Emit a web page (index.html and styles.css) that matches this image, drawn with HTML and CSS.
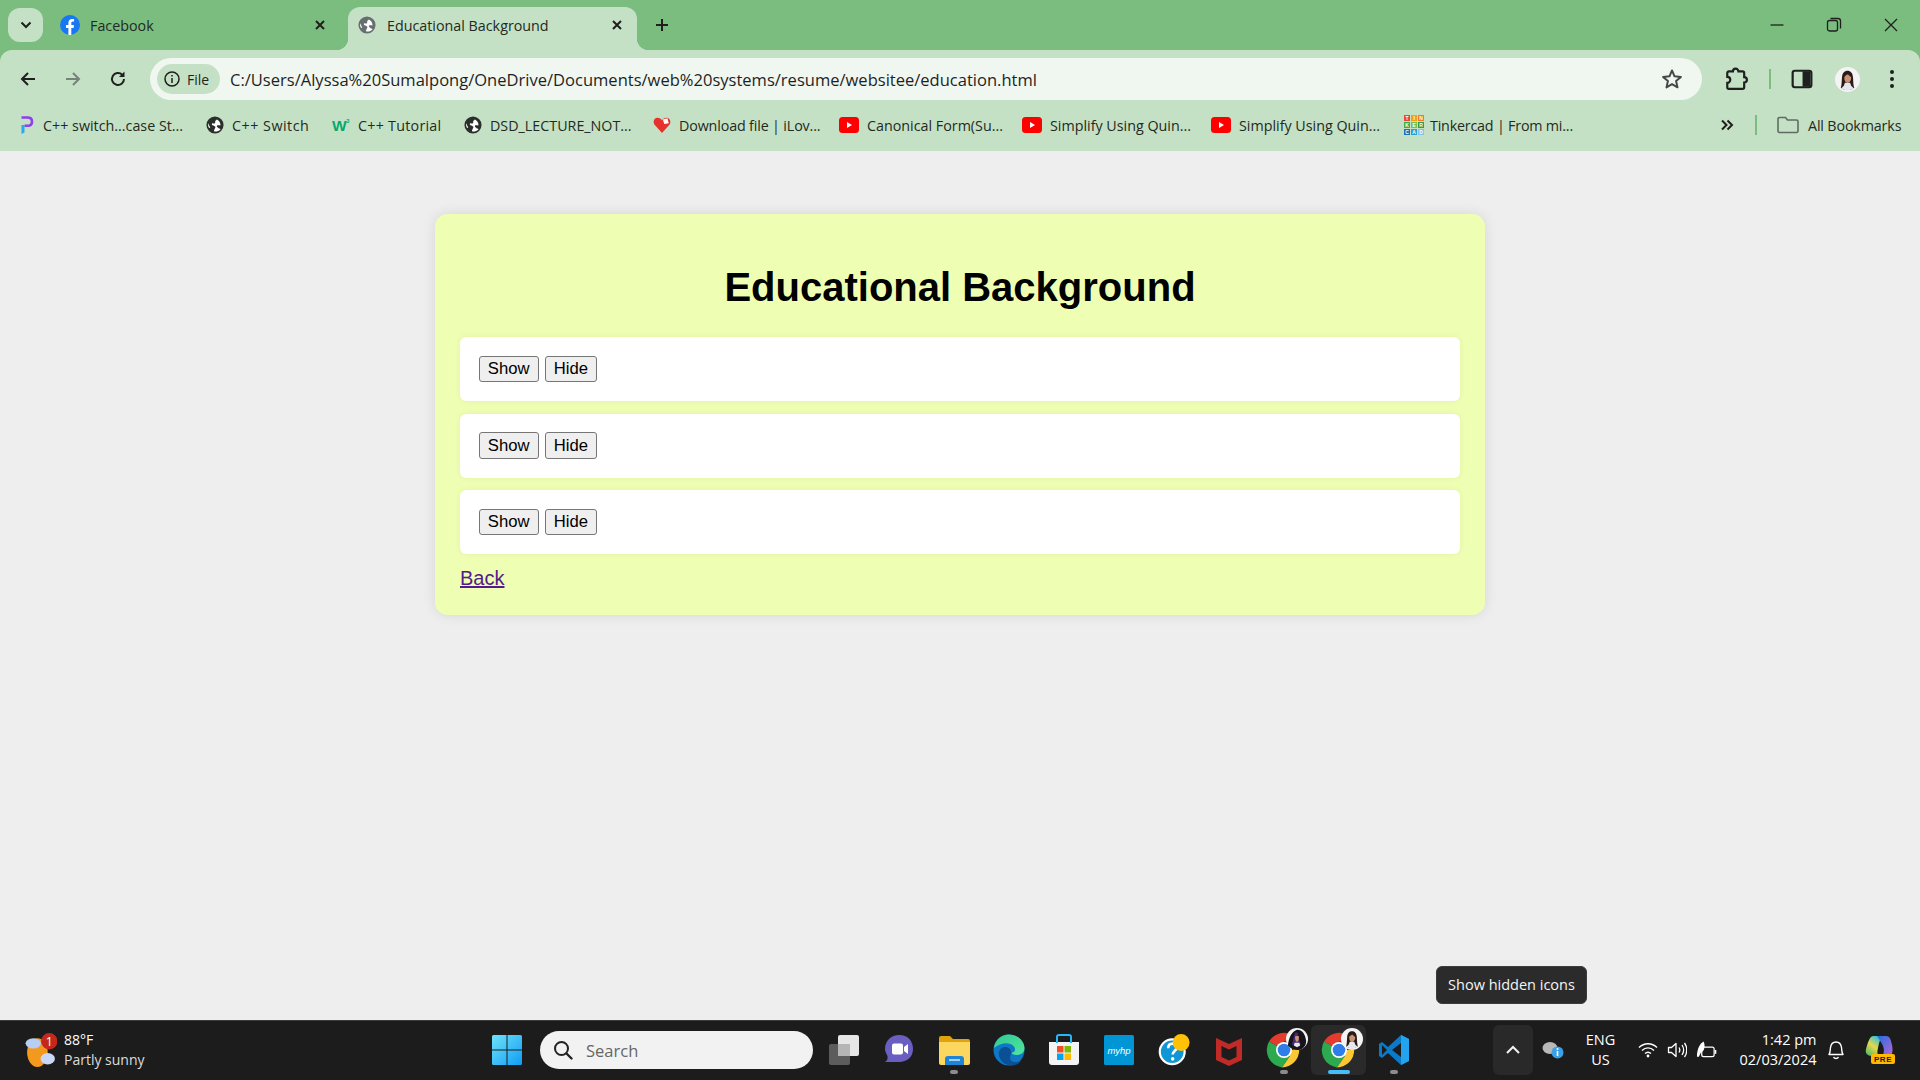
FILE: index.html
```html
<!DOCTYPE html>
<html lang="en">
<head>
<meta charset="utf-8">
<title>Educational Background</title>
<link rel="stylesheet" href="styles.css">
</head>
<body>
<svg class="defs" width="0" height="0" aria-hidden="true">
  <defs>
    <symbol id="globe" viewBox="0 0 20 20">
      <circle cx="10" cy="10" r="9.500" fill="currentColor"/>
      <path d="M12 3c.5 1-.5 1.500-1.200 2S10 6.500 10.300 7.200s-1.300 1.300-2.300 1S6.500 8.500 6.500 9.500s1.500 1 2.800 1.500 1.500 1.500.7 2.500-.5 1.800-1.200 2.700l.4 1.100c3 .3 5.500-.8 7-2.600-.3-.5-.8-.7-1.400-.7-.8 0-1-1.200-2-1.600s-.9-1.700 0-2 2.100 0 3.200.2c.3-2-.5-3.800-2-5.300-.6-.5-1.300-1-2-1.300zM2.500 8C2 10 2.500 12 3.500 13.300c1 0 1.300-.5 1-1S3.800 11 3.400 10.200 3 8.800 2.500 8z" fill="#fff"/>
    </symbol>
    <symbol id="yt" viewBox="0 0 20 16">
      <rect width="20" height="16" rx="3.500" fill="#f00"/>
      <path d="M8 5l5 3-5 3z" fill="#fff"/>
    </symbol>
    <symbol id="chrome" viewBox="0 0 36 36">
      <path d="M18 18L3 9.500A17.500 17.500 0 0 1 33.200 9.500H18z" fill="#e33b2e"/>
      <path d="M18 18L3 9.500A17.500 17.500 0 0 0 16 35.400L24 24z" fill="#2da94f"/>
      <path d="M18 18h15.200A17.500 17.500 0 0 1 16 35.400L24 24z" fill="#fcc934"/>
      <circle cx="18" cy="18" r="8" fill="#fff"/>
      <circle cx="18" cy="18" r="6.300" fill="#2f7de9"/>
    </symbol>
    <symbol id="face" viewBox="0 0 24 24">
      <circle cx="12" cy="12" r="12" fill="#f4f4f4"/>
      <path d="M5.500 20c1-2 .8-6 1.200-10C7 5.500 9 3.500 12 3.500s5 2 5.300 6.500c.3 4 .2 8 1.200 10-2 1.500-4 2-6.500 2s-4.500-.5-6.500-2z" fill="#2a1a18"/>
      <path d="M9 9.500c1-1 2-2 3.500-2.500.5 1 2 2 3 2.800.2 2.500-1 5.200-3.500 5.200S8.800 12 9 9.500z" fill="#c99272"/>
      <path d="M9.500 15h5l1 3 2.500 2.500c-1.800 1.300-3.800 2-6 2s-4.200-.7-6-2L8.500 18z" fill="#e6e6ee"/>
    </symbol>
    <symbol id="face-dark" viewBox="0 0 24 24">
      <circle cx="12" cy="12" r="12" fill="#f4f4f4"/>
      <path d="M2 19C3 14 4 5 12 2c6 0 9 5 10 12 0 3-1 6-3 7.500-2 1.500-4 2.500-7 2.500s-7-1.500-10-5z" fill="#17131a"/>
      <path d="M10 5c-1.500 3-1.800 9-3.500 13l5 2 4.500-2c-2-4-2-9-3.500-13z" fill="#4a2a78"/>
      <path d="M10 9c1.500-.5 3-.5 4 0 .3 3-.5 6-2 6s-2.300-3-2-6z" fill="#c99272"/>
      <path d="M9.500 16h5l1 3-3.500 2-3.500-2z" fill="#e6e6ee"/>
    </symbol>
  </defs>
</svg>

<div class="browser">
  <header class="tabstrip">
    <button class="tab-search" aria-label="Search tabs">
      <svg width="12" height="8" viewBox="0 0 12 8"><path d="M1.500 1.500L6 6l4.500-4.500" class="stroke-dark s2"/></svg>
    </button>
    <div class="tab tab-inactive">
      <svg class="favicon" viewBox="0 0 20 20"><circle cx="10" cy="10" r="10" fill="#1877f2"/><path d="M8.400 20v-7H6v-3h2.400V7.800c0-2.500 1.500-3.800 3.700-3.800 1 0 2 .2 2 .2v2.400h-1.200c-1.200 0-1.600.8-1.600 1.500V10h2.700l-.4 3h-2.300v7z" fill="#fff"/></svg>
      <span class="tab-title">Facebook</span>
      <svg class="tab-close" viewBox="0 0 12 12"><path d="M2 2l8 8M10 2l-8 8" class="stroke-dark s2"/></svg>
    </div>
    <div class="tab tab-active">
      <svg class="favicon globe-tab"><use href="#globe"/></svg>
      <span class="tab-title">Educational Background</span>
      <svg class="tab-close" viewBox="0 0 12 12"><path d="M2 2l8 8M10 2l-8 8" class="stroke-dark s2"/></svg>
    </div>
    <svg class="new-tab" viewBox="0 0 14 14"><path d="M7 1v12M1 7h12" class="stroke-dark s2"/></svg>
    <div class="window-controls">
      <svg viewBox="0 0 16 16"><path d="M1.500 8h13" class="stroke-dark s1"/></svg>
      <svg viewBox="0 0 16 16"><rect x="1.500" y="3.500" width="10" height="10.500" rx="2" class="stroke-dark s1"/><path d="M4.500 1.500h7.500a2.500 2.500 0 0 1 2.500 2.500v7.500" class="stroke-dark s1"/></svg>
      <svg viewBox="0 0 16 16"><path d="M2 2l12 12M14 2L2 14" class="stroke-dark s1"/></svg>
    </div>
  </header>

  <section class="toolbar">
    <div class="navrow">
      <div class="nav-btn"><svg viewBox="0 0 18 18"><path d="M16 9H3M9 3L3 9l6 6" class="stroke-dark s2"/></svg></div>
      <div class="nav-btn"><svg viewBox="0 0 18 18"><path d="M2 9h13M9 3l6 6-6 6" class="stroke-muted s2"/></svg></div>
      <div class="nav-btn"><svg viewBox="0 0 18 18"><path d="M15 9a6 6 0 1 1-1.800-4.300" class="stroke-dark s2"/><path d="M15.500 1.500v5.500H10z" fill="#1f1f1f"/></svg></div>
      <div class="omnibox">
        <div class="chip">
          <svg class="chip-icon" viewBox="0 0 16 16"><circle cx="8" cy="8" r="7" class="stroke-dark s15"/><path d="M8 7v5M8 4v1.600" class="stroke-dark s15"/></svg>
          <span>File</span>
        </div>
        <span class="url">C:/Users/Alyssa%20Sumalpong/OneDrive/Documents/web%20systems/resume/websitee/education.html</span>
        <svg class="star" viewBox="0 0 20 20"><path d="M10 2.200l2.300 5.400 5.800.5-4.400 3.800 1.300 5.700L10 14.600l-5 3 1.300-5.700L1.900 8.100l5.800-.5z" fill="none" stroke="#474747" stroke-width="1.800" stroke-linejoin="round"/></svg>
      </div>
      <svg class="act-ext" viewBox="0 0 22 22"><path d="M4.500 20a1.500 1.500 0 0 1-1.500-1.500v-4a2.500 2.500 0 0 0 0-5.500V5.500A1.500 1.500 0 0 1 4.500 4h3.700a2.500 2.500 0 0 1 5 0H17a1.500 1.500 0 0 1 1.500 1.500v3.700a2.500 2.500 0 0 1 0 5v4.300A1.500 1.500 0 0 1 17 20z" class="stroke-dark s2"/></svg>
      <span class="act-div"></span>
      <svg class="act-panel" viewBox="0 0 20 20"><rect x="1.500" y="2.500" width="17" height="15" rx="2" class="stroke-dark s2"/><path d="M10.500 3h7v14h-7z" fill="#1f1f1f"/></svg>
      <svg class="act-avatar"><use href="#face"/></svg>
      <svg class="act-menu" viewBox="0 0 6 20"><circle cx="3" cy="3" r="2" fill="#1f1f1f"/><circle cx="3" cy="10" r="2" fill="#1f1f1f"/><circle cx="3" cy="17" r="2" fill="#1f1f1f"/></svg>
    </div>
    <nav class="bookmarks">
      <div class="bm b1"><svg class="bm-icon" viewBox="0 0 20 24"><path d="M4 2h8c4 0 6 2.200 6 5.500s-2 5.500-6 5.500H8" fill="none" stroke="#8e3df0" stroke-width="3.500"/><path d="M4 12h4v10l-4 2z" fill="#29a8f0"/></svg><span>C++ switch...case St...</span></div>
      <div class="bm b2"><svg class="bm-icon globe-bm"><use href="#globe"/></svg><span>C++ Switch</span></div>
      <div class="bm b3"><svg class="bm-icon" viewBox="0 0 22 18"><text x="0" y="16" class="w3-w">W</text><text x="17.500" y="7" class="w3-3">3</text></svg><span>C++ Tutorial</span></div>
      <div class="bm b4"><svg class="bm-icon globe-bm"><use href="#globe"/></svg><span>DSD_LECTURE_NOT...</span></div>
      <div class="bm b5"><svg class="bm-icon" viewBox="0 0 20 20"><path d="M10 19L1.500 9.500C-.5 6 1.500 2 5 2c2.200 0 4 1.200 5 3 1-1.800 2.800-3 5-3 3.500 0 5.500 4 3.500 7.500z" fill="#e5322d"/><path d="M11 4l5-1.500 1.500 5.500-5 1z" fill="#fff"/></svg><span>Download file | iLov...</span></div>
      <div class="bm b6"><svg class="bm-icon yt-icon"><use href="#yt"/></svg><span>Canonical Form(Su...</span></div>
      <div class="bm b7"><svg class="bm-icon yt-icon"><use href="#yt"/></svg><span>Simplify Using Quin...</span></div>
      <div class="bm b8"><svg class="bm-icon yt-icon"><use href="#yt"/></svg><span>Simplify Using Quin...</span></div>
      <div class="bm b9">
        <svg class="bm-icon tinker" viewBox="0 0 20 20">
          <rect width="6" height="6" fill="#e8492f"/><rect x="7" width="6" height="6" fill="#f0a020"/><rect x="14" width="6" height="6" fill="#f47a28"/>
          <rect y="7" width="6" height="6" fill="#3fae49"/><rect x="7" y="7" width="6" height="6" fill="#7cc242"/><rect x="14" y="7" width="6" height="6" fill="#2f9e57"/>
          <rect y="14" width="6" height="6" fill="#1c75bc"/><rect x="7" y="14" width="6" height="6" fill="#2a9fd6"/><rect x="14" y="14" width="6" height="6" fill="#7cc4e8"/>
          <text x="3" y="5" class="tk">T</text><text x="10" y="5" class="tk">I</text><text x="17" y="5" class="tk">N</text>
          <text x="3" y="12" class="tk">K</text><text x="10" y="12" class="tk">E</text><text x="17" y="12" class="tk">R</text>
          <text x="3" y="19" class="tk">C</text><text x="10" y="19" class="tk">A</text><text x="17" y="19" class="tk">D</text>
        </svg>
        <span>Tinkercad | From mi...</span>
      </div>
      <svg class="bm-more" viewBox="0 0 14 12"><path d="M2 1.500L6.500 6 2 10.500M7.500 1.500L12 6l-4.500 4.500" class="stroke-dark s2"/></svg>
      <span class="bm-div"></span>
      <svg class="bm-folder" viewBox="0 0 22 18"><path d="M2.500 1.500h6l2 2.500h9a1.500 1.500 0 0 1 1.500 1.500V15a1.500 1.500 0 0 1-1.500 1.500h-17A1.500 1.500 0 0 1 1 15V3a1.500 1.500 0 0 1 1.500-1.500z" fill="none" stroke="#5f6b63" stroke-width="1.600"/></svg>
      <span class="bm-all">All Bookmarks</span>
    </nav>
  </section>

  <main class="page">
    <article class="card">
      <h1>Educational Background</h1>
      <div class="row"><button>Show</button><button>Hide</button></div>
      <div class="row"><button>Show</button><button>Hide</button></div>
      <div class="row"><button>Show</button><button>Hide</button></div>
      <a class="back" href="#">Back</a>
    </article>
    <div class="tooltip">Show hidden icons</div>
  </main>

  <footer class="taskbar">
    <div class="weather">
      <svg class="weather-icon" viewBox="0 0 32 34">
        <ellipse cx="13" cy="19" rx="10" ry="14" fill="#f39a1e"/>
        <ellipse cx="9" cy="10" rx="7.500" ry="5" fill="#b8cdf2"/>
        <ellipse cx="23" cy="25" rx="7" ry="5.500" fill="#c8d8f6"/>
        <circle cx="24.500" cy="8" r="8" fill="#c4281c"/>
        <text x="24.500" y="12.500" class="badge-num">1</text>
      </svg>
      <div class="weather-text"><span class="temp">88°F</span><span class="cond">Partly sunny</span></div>
    </div>
    <svg class="win" viewBox="0 0 30 30"><defs><linearGradient id="wg" x1="0" y1="0" x2="1" y2="1"><stop offset="0" stop-color="#6fe3fb"/><stop offset="1" stop-color="#0f9cf3"/></linearGradient></defs><path d="M0 1.500A1.500 1.500 0 0 1 1.500 0h13v14.500H0zM15.500 0H28.500A1.500 1.500 0 0 1 30 1.500v13H15.500zM0 15.500h14.500V30H1.500A1.500 1.500 0 0 1 0 28.500zM15.500 15.500H30v13a1.500 1.500 0 0 1-1.500 1.500h-13z" fill="url(#wg)"/></svg>
    <div class="search">
      <svg viewBox="0 0 20 20"><circle cx="8.500" cy="8.500" r="6.500" fill="none" stroke="#222" stroke-width="2"/><path d="M13.500 13.500l5 5" stroke="#222" stroke-width="2.400" stroke-linecap="round"/></svg>
      <span>Search</span>
    </div>
    <div class="apps">
      <div class="app"><svg viewBox="0 0 32 32"><rect x="1" y="10" width="21" height="21" rx="2" fill="#5c5c5c"/><rect x="10" y="1" width="21" height="21" rx="2" fill="#e6e6e6"/><rect x="10" y="10" width="12" height="12" fill="#b5b5b5"/></svg></div>
      <div class="app"><svg viewBox="0 0 32 32"><path d="M16 1c9 0 14 6 14 14s-6 13-14 13H2c2-1 3-3 2.500-6C3 19 2 17 2 15 2 7 8 1 16 1z" fill="#6a5fc1"/><rect x="9" y="9.500" width="11" height="11" rx="2" fill="#fff"/><path d="M21 13l4-3v10l-4-3z" fill="#fff"/></svg></div>
      <div class="app has-dot"><svg viewBox="0 0 32 32"><path d="M1 4a2 2 0 0 1 2-2h9l3 3h15a2 2 0 0 1 2 2v3H1z" fill="#e0a30b"/><path d="M1 8h31v21a2 2 0 0 1-2 2H3a2 2 0 0 1-2-2z" fill="#fcd75f"/><path d="M7 31v-6a3 3 0 0 1 3-3h13a3 3 0 0 1 3 3v6z" fill="#1f83d6"/><rect x="11" y="25" width="11" height="2" fill="#9dd2f7"/></svg></div>
      <div class="app"><svg viewBox="0 0 32 32"><defs><linearGradient id="eg" x1="0" y1="0" x2="1" y2="1"><stop offset="0" stop-color="#30c98f"/><stop offset="1" stop-color="#50e6a0"/></linearGradient></defs><circle cx="16" cy="16" r="15.500" fill="#0f78c4"/><path d="M1 14C2 6 8 .5 16 .5c9 0 15.500 7 15.500 13.500 0 5-4 7-8 7-3 0-5-1-5-2.500 4 0 4.500-4 2-6.500C17 8 8 8 1 14z" fill="url(#eg)"/><path d="M18.500 18.500c-.5-6-9-8-12-2-2.500 5.500 2 15 12 15 4 0 8-2 10-5-4 2-8 2-10 .5-2.500-2-1-7 0-8.500z" fill="#0b4f94"/></svg></div>
      <div class="app"><svg viewBox="0 0 32 32"><path d="M1 8h30v20a3 3 0 0 1-3 3H4a3 3 0 0 1-3-3z" fill="#f4f4f4"/><path d="M9 9V3a2 2 0 0 1 2-2h10a2 2 0 0 1 2 2v6" fill="none" stroke="#29b6f6" stroke-width="2"/><rect x="9" y="12" width="6.500" height="6.500" fill="#f25022"/><rect x="16.500" y="12" width="6.500" height="6.500" fill="#7fba00"/><rect x="9" y="19.500" width="6.500" height="6.500" fill="#00a4ef"/><rect x="16.500" y="19.500" width="6.500" height="6.500" fill="#ffb900"/></svg></div>
      <div class="app"><svg viewBox="0 0 32 32"><rect x="1" y="1" width="30" height="30" rx="1.500" fill="#0096d6"/><text x="16" y="20" class="myhp">myhp</text></svg></div>
      <div class="app"><svg viewBox="0 0 36 36"><circle cx="16" cy="20" r="14" fill="#0f96d6" stroke="#fff" stroke-width="2.500"/><path d="M11.500 16c0-7 9.500-6.500 9.500-1 0 4-4.500 4-4.500 8" fill="none" stroke="#fff" stroke-width="3"/><circle cx="16.500" cy="28" r="2" fill="#fff"/><circle cx="26" cy="9.500" r="9.500" fill="#ffc107"/></svg></div>
      <div class="app"><svg viewBox="0 0 32 32"><path d="M3 4l13 6 13-6v22l-13 6-13-6z" fill="#c12b27"/><path d="M8.500 12v11l7.500 3.500 7.500-3.500V12L16 15.500z" fill="#1c1c1c"/></svg></div>
      <div class="app has-dot chrome-app"><svg class="chrome-icon"><use href="#chrome"/></svg><svg class="chrome-face"><use href="#face-dark"/></svg></div>
      <div class="app app-active chrome-app"><svg class="chrome-icon"><use href="#chrome"/></svg><svg class="chrome-face"><use href="#face"/></svg></div>
      <div class="app has-dot"><svg viewBox="0 0 32 32"><path d="M23 1l8 4v22l-8 4-13-12-6 5-3-2v-12l3-2 6 5z" fill="#0a7acb"/><path d="M23 9v14l-9-7z" fill="#1c1c1c"/><path d="M4 11v10l5-5z" fill="#1c1c1c"/><path d="M23 1l8 4v22l-8 4z" fill="#24a4ee"/></svg></div>
    </div>
    <div class="tray">
      <div class="tray-chevron"><svg viewBox="0 0 16 10"><path d="M2 8l6-6 6 6" fill="none" stroke="#f2f2f2" stroke-width="2"/></svg></div>
      <svg class="tray-cloud" viewBox="0 0 22 20"><ellipse cx="8" cy="8" rx="7.500" ry="6" fill="#b8b8b8"/><circle cx="15.500" cy="12.500" r="6" fill="#3aa0e8"/><path d="M15.500 11v5" stroke="#fff" stroke-width="1.600"/><circle cx="15.500" cy="9" r="1" fill="#fff"/></svg>
      <div class="tray-lang"><span>ENG</span><span>US</span></div>
      <svg class="tray-wifi" viewBox="0 0 20 16"><path d="M1 5.500c5-5 13-5 18 0M4 8.500c3.500-3.500 8.500-3.500 12 0M7 11.500c1.800-1.600 4.200-1.600 6 0" fill="none" stroke="#fff" stroke-width="1.400"/><circle cx="10" cy="14" r="1.400" fill="#fff"/></svg>
      <svg class="tray-vol" viewBox="0 0 20 18"><path d="M1.500 6.500h3L9 2.500v13l-4.500-4h-3z" fill="none" stroke="#fff" stroke-width="1.300" stroke-linejoin="round"/><path d="M12 6.500c1 1.500 1 3.500 0 5M15 4c2 3 2 7 0 10M17.500 2c3 4 3 10 0 14" fill="none" stroke="#fff" stroke-width="1.300"/></svg>
      <svg class="tray-batt" viewBox="0 0 22 20"><rect x="6" y="7" width="13" height="10" rx="2" fill="none" stroke="#fff" stroke-width="1.300"/><path d="M20.500 10v4" stroke="#fff" stroke-width="1.600"/><path d="M1 17c0-8 3-14 7-16 2 5 1 10-3 12l-2 4z" fill="#fff"/></svg>
      <div class="tray-clock"><span>1:42 pm</span><span>02/03/2024</span></div>
      <svg class="tray-bell" viewBox="0 0 18 20"><path d="M2 14.500c1.500-2 1-4 1.500-7C4 4 6.500 2 9 2s5 2 5.500 5.500c.5 3 0 5 1.500 7z M6.500 17a2.800 2.800 0 0 0 5 0" fill="none" stroke="#fff" stroke-width="1.400" stroke-linejoin="round"/></svg>
      <svg class="tray-copilot" viewBox="0 0 32 30">
        <defs>
          <linearGradient id="cg" x1="0" y1="1" x2=".6" y2="0"><stop offset="0" stop-color="#37b86a"/><stop offset=".55" stop-color="#e8d84a"/><stop offset="1" stop-color="#35c3d6"/></linearGradient>
          <linearGradient id="cg2" x1="0" y1="0" x2="1" y2="1"><stop offset="0" stop-color="#1f6fe0"/><stop offset="1" stop-color="#b866d6"/></linearGradient>
        </defs>
        <path d="M9 1c-4 1-5 7-7 13-1 4 1 7 6 7h8c-3-1-3-4-2-8s2-11 5-12z" fill="url(#cg)"/>
        <path d="M13 1h9c4 0 5 4 6 9s1 10-3 11h-7c3-3 2-9 0-12-1-2-3-5-5-8z" fill="url(#cg2)"/>
        <rect x="7" y="19" width="24" height="10" rx="2" fill="#ffb900"/>
        <text x="19" y="27" class="pre">PRE</text>
      </svg>
    </div>
  </footer>
</div>
</body>
</html>
```

FILE: styles.css
```css
* { box-sizing: border-box; }

html, body { margin: 0; height: 100%; }

body { font-family: "Open Sans", "Noto Sans", sans-serif; overflow: hidden; }

.defs { position: absolute; }

.stroke-dark { fill: none; stroke: #1f1f1f; }
.stroke-muted { fill: none; stroke: #75837a; }
.s1 { stroke-width: 1.300; }
.s15 { stroke-width: 1.500; }
.s2 { stroke-width: 2; }

.browser { display: flex; flex-direction: column; height: 1080px; background: #7bbd7f; }

/* tabs */
.tabstrip { display: flex; height: 50px; flex: none; align-items: flex-start; }

.tab-search {
  width: 35px; height: 34px; margin: 8px 0 0 8px; padding: 0; border: 0;
  border-radius: 12px; background: #c5e1c5;
  display: flex; align-items: center; justify-content: center;
}

.tab { height: 43px; margin-top: 7px; display: flex; align-items: center; position: relative; color: #1f2a22; }
.tab-inactive { width: 300px; margin-left: 5px; padding: 0 0 7px 12px; }
.tab-inactive .tab-close { margin-right: 22px; }
.tab-active { width: 289px; padding: 0 0 7px 10px; background: #c5e1c5; border-radius: 12px 12px 0 0; }
.tab-active::before, .tab-active::after { content: ""; position: absolute; bottom: 0; width: 12px; height: 12px; }
.tab-active::before { left: -12px; background: radial-gradient(circle at 0 0, transparent 12px, #c5e1c5 12.500px); }
.tab-active::after { right: -12px; background: radial-gradient(circle at 100% 0, transparent 12px, #c5e1c5 12.500px); }

.favicon { width: 20px; height: 20px; flex: none; }
.globe-tab { width: 18px; height: 18px; color: #666e70; }
.tab-title { font-size: 14.300px; margin-left: 10px; white-space: nowrap; }
.tab-active .tab-title { margin-left: 11px; }
.tab-close { width: 12px; height: 12px; flex: none; margin-left: auto; margin-right: 14px; }

.new-tab { width: 14px; height: 14px; margin: 18px 0 0 18px; flex: none; }

.window-controls { margin-left: auto; display: flex; margin-top: 17px; margin-right: 21px; gap: 41px; }
.window-controls svg { width: 16px; height: 16px; }

/* toolbar */
.toolbar { flex: none; height: 101px; background: #c5e1c5; border-radius: 12px 12px 0 0; }

.navrow { display: flex; align-items: center; height: 50px; padding-top: 8px; padding-left: 5px; }
.nav-btn { width: 45px; display: flex; justify-content: center; }
.nav-btn svg { width: 18px; height: 18px; }

.omnibox { width: 1552px; height: 42px; margin-left: 10px; border-radius: 21px; background: #f0f7f0; display: flex; align-items: center; flex: none; padding-left: 7px; }
.chip { width: 63px; height: 30px; border-radius: 15px; background: #c5e1c5; display: flex; align-items: center; padding-left: 7px; font-size: 14px; color: #1f1f1f; }
.chip-icon { width: 16px; height: 16px; margin-right: 7px; }
.url { margin-left: 10px; font-size: 16.550px; color: #1f1f1f; white-space: nowrap; }
.star { width: 22px; height: 22px; margin-left: auto; margin-right: 19px; }

.act-ext { width: 24px; height: 24px; margin-left: 22px; flex: none; }
.act-div { width: 2px; height: 20px; margin-left: 21px; background: #7bbd7f; flex: none; }
.act-panel { width: 22px; height: 22px; margin-left: 20px; flex: none; }
.act-avatar { width: 25px; height: 25px; margin-left: 22px; flex: none; }
.act-menu { width: 6px; height: 20px; margin-left: 29px; flex: none; }

.bookmarks { display: flex; align-items: center; height: 50px; padding-left: 17px; color: #1f2a22; font-size: 14.300px; white-space: nowrap; }
.bm { display: flex; align-items: center; flex: none; overflow: hidden; }
.bm-icon { width: 18px; height: 18px; margin-right: 8px; flex: none; }
.globe-bm { color: #2a2f2c; }
.yt-icon { width: 20px; height: 16px; }
.tinker { width: 20px; height: 20px; margin-right: 6px; }
.w3-w { font: bold 19px "Liberation Sans", sans-serif; fill: #04aa6d; }
.w3-3 { font: bold 7px "Liberation Sans", sans-serif; fill: #04aa6d; }
.tk { font: bold 5px "Liberation Sans", sans-serif; fill: #fff; text-anchor: middle; }
.b1 { width: 189px; }
.b2 { width: 126px; letter-spacing: .5px; }
.b3 { width: 132px; letter-spacing: .25px; }
.b4 { width: 189px; }
.b5 { width: 186px; letter-spacing: -.15px; }
.b6 { width: 183px; }
.b7 { width: 189px; }
.b8 { width: 193px; }
.b9 { width: 313px; letter-spacing: -.2px; }

.bm-more { width: 14px; height: 12px; flex: none; margin-left: 3px; }
.bm-div { width: 2px; height: 20px; margin-left: 21px; background: #7bbd7f; flex: none; }
.bm-folder { width: 22px; height: 18px; margin-left: 20px; flex: none; }
.bm-all { margin-left: 9px; letter-spacing: -.15px; }

/* page */
.page { flex: 1; background: #eee; position: relative; display: flex; justify-content: center; align-items: flex-start; padding-top: 63px; }

.card {
  width: 1050px; padding: 25px; background: #eeffb3; border-radius: 12.500px;
  box-shadow: 0 0 12.500px rgba(0, 0, 0, .1); font-family: "Liberation Sans", Arial, sans-serif;
}
.card h1 { margin: 25px 0 27px; font-size: 40px; line-height: 46px; text-align: center; color: #000; }
.row { display: flex; align-items: center; gap: 6px; height: 64px; margin-bottom: 12.500px; padding: 0 18.750px; background: #fff; border-radius: 6.250px; box-shadow: 0 0 6px rgba(0, 0, 0, .06); }
.row button { font: 16.670px "Liberation Sans", Arial, sans-serif; height: 26.500px; padding: 0 8.100px; color: #000; background: #efefef; border: 1.250px solid #767676; border-radius: 3px; }
.back { display: block; font-size: 20px; line-height: 23px; color: #551a8b; width: max-content; }

.tooltip { position: absolute; left: 1436px; top: 815px; width: 151px; height: 38px; padding-bottom: 1px; display: flex; align-items: center; justify-content: center; background: #2b2b2b; border: 1px solid #3c3c3c; border-radius: 6px; color: #f5f5f5; font-size: 14.500px; white-space: nowrap; }

/* taskbar */
.taskbar { flex: none; height: 60px; padding-bottom: 1px; background: #1c1c1c; border-top: 1px solid #3a3a3a; display: flex; align-items: center; color: #fff; }

.weather { width: 492px; padding-left: 24px; display: flex; align-items: center; flex: none; }
.weather-icon { width: 33px; height: 35px; flex: none; }
.badge-num { font: 12px "Open Sans", sans-serif; fill: #fff; text-anchor: middle; }
.weather-text { display: flex; flex-direction: column; margin-left: 7px; font-size: 14px; line-height: 20px; }
.cond { color: #ddd; }

.win { width: 30px; height: 30px; flex: none; }
.search { width: 273px; height: 38px; margin-left: 18px; border-radius: 19px; background: #f2f2f2; display: flex; align-items: center; padding-left: 13px; flex: none; color: #666; font-size: 16.500px; }
.search svg { width: 20px; height: 20px; margin-right: 13px; }

.apps { display: flex; margin-left: 3px; flex: none; }
.app { width: 55px; height: 50px; position: relative; display: flex; align-items: center; justify-content: center; border-radius: 6px; }
.app svg { width: 32px; height: 32px; }
.has-dot::after, .app-active::after { content: ""; position: absolute; bottom: 1px; left: 50%; width: 8px; height: 4px; margin-left: -4px; border-radius: 2px; background: #8c8c8c; }
.app-active { background: #2a2a2a; }
.app-active::after { width: 22px; margin-left: -11px; background: #47bdf6; }
.app .chrome-icon { width: 36px; height: 36px; }
.app .chrome-face { width: 22px; height: 22px; position: absolute; top: 3px; left: 30px; }
.myhp { font: italic 9.500px "Liberation Sans", sans-serif; fill: #fff; text-anchor: middle; }
.pre { font: bold 8px "Liberation Sans", sans-serif; fill: #1c1c1c; text-anchor: middle; letter-spacing: .6px; }

.tray { margin-left: auto; display: flex; align-items: center; flex: none; padding-right: 24.500px; }
.tray-chevron { width: 40px; height: 50px; background: #292929; border-radius: 6px; display: flex; align-items: center; justify-content: center; }
.tray-chevron svg { width: 16px; height: 10px; }
.tray-cloud { width: 22px; height: 20px; margin-left: 8.500px; }
.tray-lang { width: 48px; margin-left: 13px; display: flex; flex-direction: column; align-items: center; font-size: 14.500px; line-height: 20px; }
.tray-wifi { width: 20px; height: 16px; margin-left: 13px; }
.tray-vol { width: 20px; height: 18px; margin-left: 9px; }
.tray-batt { width: 21px; height: 20px; margin-left: 9px; }
.tray-clock { width: 100px; display: flex; flex-direction: column; align-items: flex-end; font-size: 14.500px; line-height: 20px; }
.tray-bell { width: 18px; height: 20px; margin-left: 10px; }
.tray-copilot { width: 32px; height: 30px; margin-left: 19px; }
```
